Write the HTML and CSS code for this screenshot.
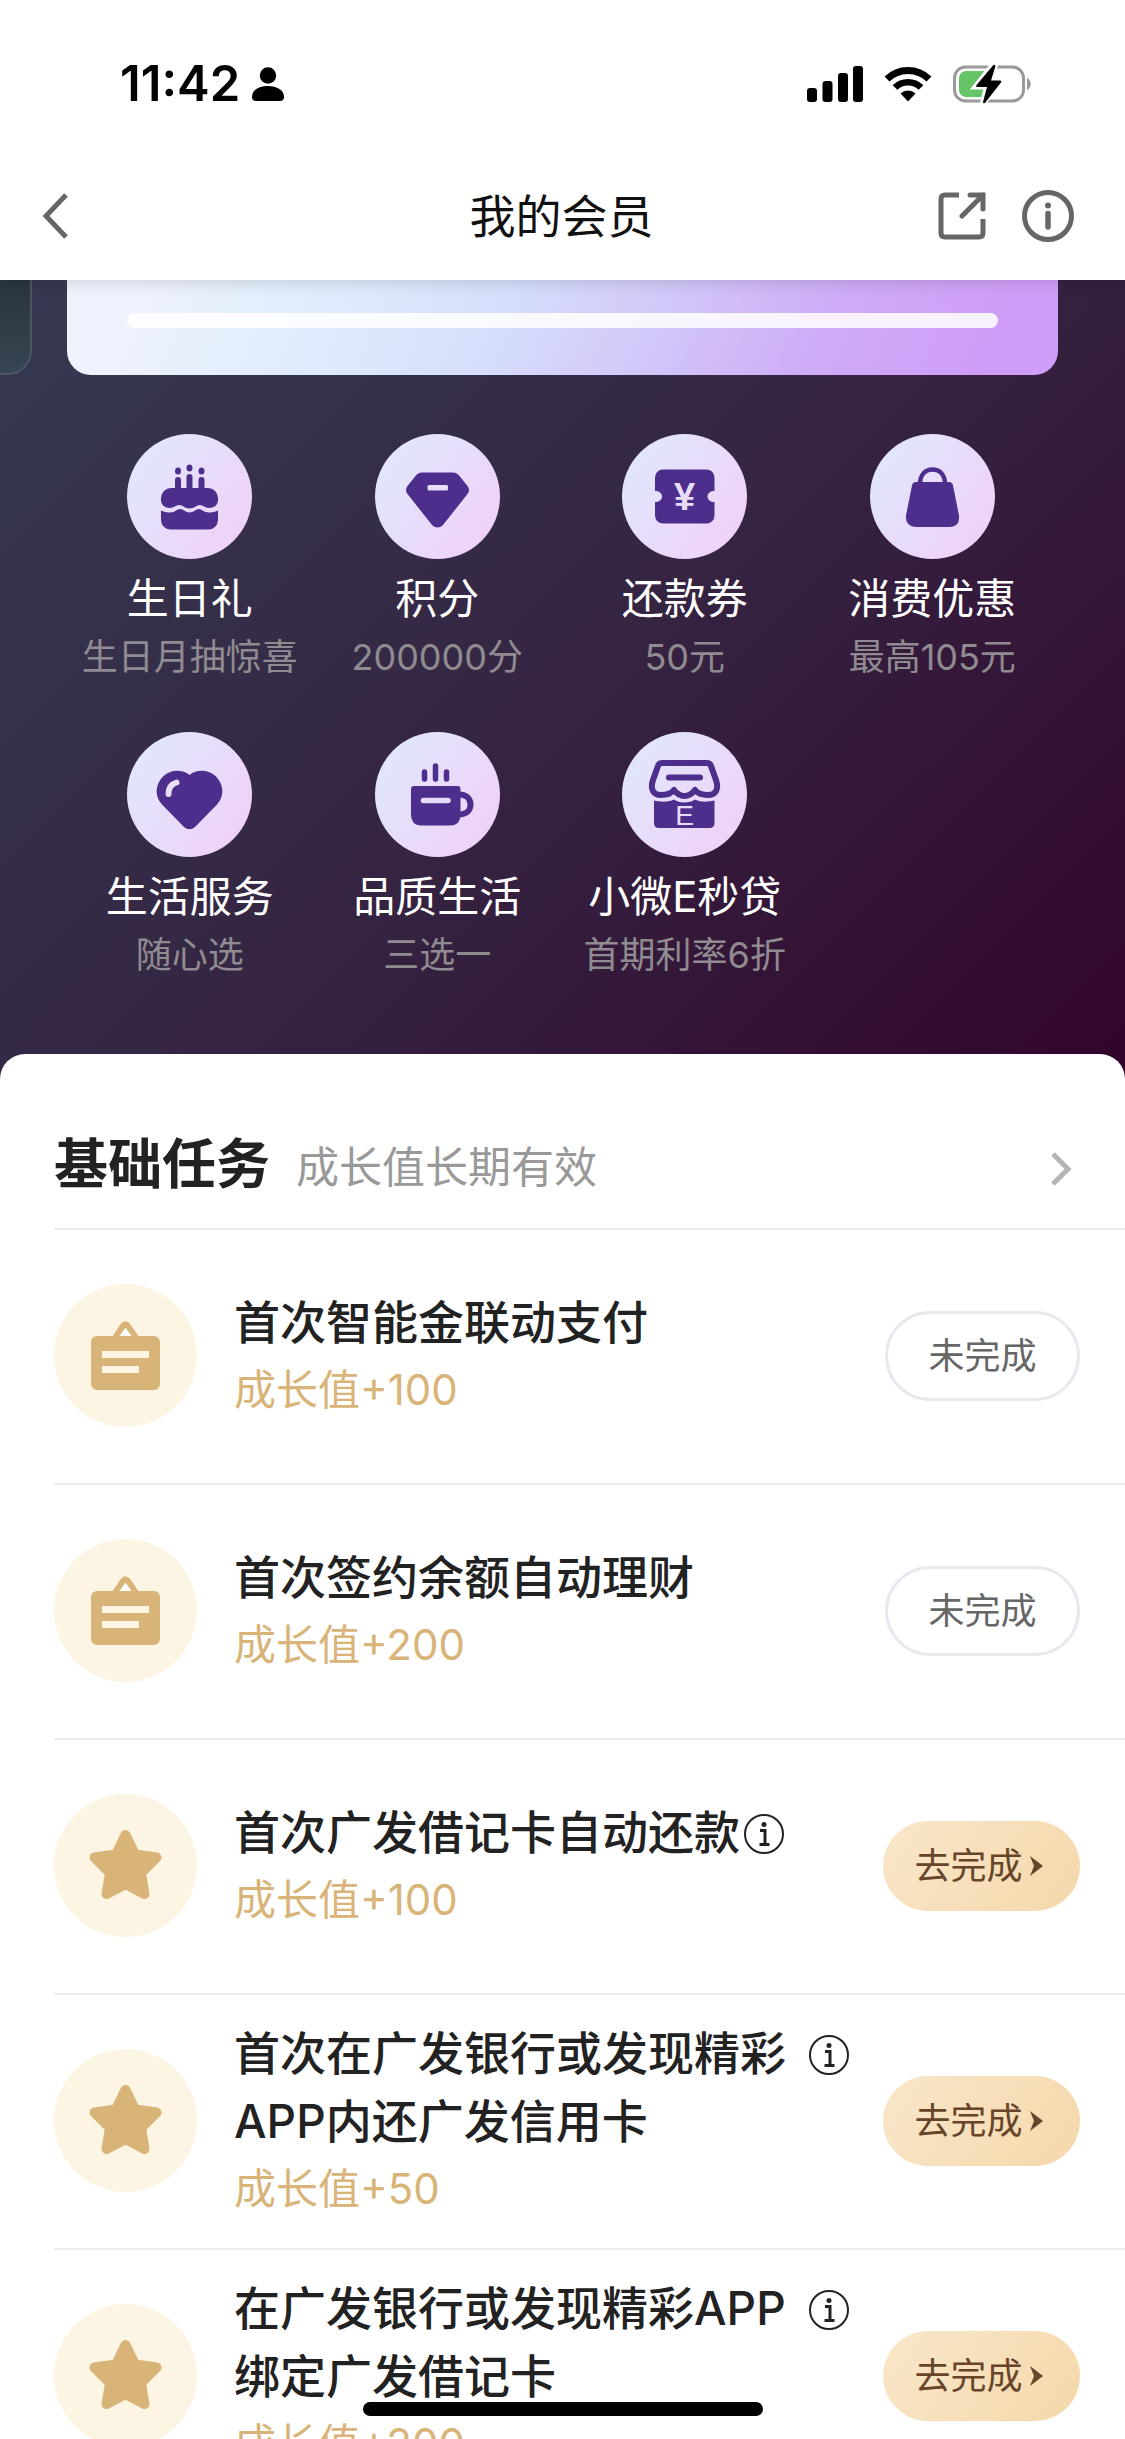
FILE: index.html
```html
<!DOCTYPE html>
<html lang="zh-CN">
<head>
<meta charset="utf-8">
<meta name="viewport" content="width=device-width, initial-scale=1">
<title>我的会员</title>
<link rel="stylesheet" href="styles.css">
</head>
<body>
<svg class="sprite" aria-hidden="true">
  <symbol id="board" viewBox="0 0 143 143">
    <path d="M61 54l8-12q2.500-3.500 5 0l8 12" fill="none" stroke="currentColor" stroke-width="6" stroke-linejoin="round"/>
    <path d="M71.500 44l6 8h-12z" fill="#fff"/>
    <path fill-rule="evenodd" fill="currentColor" d="M43 52h57a6 6 0 0 1 6 6v42a6 6 0 0 1-6 6H43a6 6 0 0 1-6-6V58a6 6 0 0 1 6-6zM48 67v7h47v-7zM48 82v7h37v-7z"/>
  </symbol>
  <symbol id="star" viewBox="0 0 143 143">
    <path d="M71.500 41L81 60.500 102.500 63.500 87 79 90.500 100 71.500 90 52.500 100 56 79 40.500 63.500 62 60.500z" fill="currentColor" stroke="currentColor" stroke-width="10" stroke-linejoin="round"/>
  </symbol>
  <symbol id="info" viewBox="0 0 40 40">
    <circle cx="20" cy="20" r="19" fill="none" stroke="currentColor" stroke-width="2"/>
    <circle cx="20" cy="10.500" r="2.500" fill="currentColor"/>
    <path d="M16 16.500h5V30M15.500 30.500h10" fill="none" stroke="currentColor" stroke-width="3"/>
  </symbol>
  <symbol id="go" viewBox="0 0 14 22">
    <path d="M1 1l13 10L1 21l4-10z" fill="currentColor"/>
  </symbol>
</svg>

<div class="app">
  <header class="top">
    <div class="status">
      <span class="time">11:42</span>
      <svg class="person" viewBox="0 0 32 34"><circle cx="16" cy="8.500" r="8.200"/><path d="M0 30C0 23 7 19 16 19s16 4 16 11q0 4-4 4H4q-4 0-4-4z"/></svg>
      <div class="signals">
        <svg width="56" height="36" viewBox="0 0 56 36"><rect y="22" width="10" height="14" rx="3"/><rect x="15.500" y="15" width="10" height="21" rx="3"/><rect x="31" y="7" width="10" height="29" rx="3"/><rect x="46" width="10" height="36" rx="3"/></svg>
        <svg width="48" height="36" viewBox="0 0 48 36"><path d="M3 13a30 30 0 0 1 42 0" fill="none" stroke="#000" stroke-width="7"/><path d="M11 21.500a18.500 18.500 0 0 1 26 0" fill="none" stroke="#000" stroke-width="6.500"/><path d="M16.500 27.500a11 11 0 0 1 15 0L24 35.500z"/></svg>
        <svg width="78" height="40" viewBox="0 0 78 40"><rect x="1.500" y="3" width="69" height="34" rx="11" fill="none" stroke="#999" stroke-width="3"/><path d="M74 14c5 2 5 10 0 12z" fill="#999"/><path d="M13 7h21v26H13a7 7 0 0 1-7-7V14a7 7 0 0 1 7-7z" fill="#65c466"/><path d="M40 1L23 22.500h11L30 39 48 17H37.500L42 1z" stroke="#fff" stroke-width="6"/><path d="M40 1.500L23.500 21q-1 2 1 2H34l-4 15q0 2 2 1L48 18.500q1-2-1-2h-9L42.500 2q-1-2-2.500-.5z"/></svg>
      </div>
    </div>
    <nav class="nav">
      <a class="back" href="#" aria-label="返回"><svg width="28" height="46" viewBox="0 0 28 46"><path d="M25 2L5 23l20 21" fill="none" stroke="currentColor" stroke-width="5"/></svg></a>
      <h1 class="nav-title">我的会员</h1>
      <div class="nav-tools">
        <button type="button" aria-label="分享"><svg width="48" height="48" viewBox="0 0 48 48" fill="none" stroke="currentColor" stroke-width="5"><path d="M21 3H7Q3 3 3 7v34q0 4 4 4h34q4 0 4-4V27"/><path d="M32 3h13v14M45 3L24 24" stroke-linecap="round"/></svg></button>
        <button type="button" aria-label="说明"><svg width="52" height="52" viewBox="0 0 52 52"><circle cx="26" cy="26" r="23.500" fill="none" stroke="currentColor" stroke-width="5"/><circle cx="26" cy="15.500" r="3" fill="currentColor"/><path d="M26 23.500v13.500" stroke="currentColor" stroke-width="5.500" stroke-linecap="round"/></svg></button>
      </div>
    </nav>
  </header>

  <main class="main">
    <section class="hero">
      <div class="cards">
        <div class="card-prev"></div>
        <div class="card"><div class="bar"></div></div>
      </div>
      <ul class="perks">
        <li class="perk">
          <svg class="perk-icon" viewBox="0 0 125 125"><g fill="currentColor"><ellipse cx="51" cy="37" rx="3" ry="3.500"/><ellipse cx="62.500" cy="34" rx="3" ry="3.500"/><ellipse cx="74.500" cy="37" rx="3" ry="3.500"/><path d="M48 56V46a3 3 0 0 1 6 0v10zM59.500 56V43a3 3 0 0 1 6 0v13zM71.500 56V46a3 3 0 0 1 6 0v10z"/><path d="M44 54h37a10 10 0 0 1 10 10v2c0 5-4 8-9 8-4 0-6-3-9-3s-6 3.500-10.500 3.500-7-3.500-10.500-3.500-5 3-9 3c-5 0-9-3-9-8v-2a10 10 0 0 1 10-10z"/><path d="M34 76.500c3 1.500 6 2 9 2 5 0 7-3.500 10-3.500s6 3.500 9.500 3.500 7-3.500 9.500-3.500 5 3.500 10 3.500c3 0 6-.5 9-2V86a9.500 9.500 0 0 1-9.500 9.500h-38A9.500 9.500 0 0 1 34 86z"/></g></svg>
          <span class="perk-name">生日礼</span><span class="perk-note">生日月抽惊喜</span>
        </li>
        <li class="perk">
          <svg class="perk-icon" viewBox="0 0 125 125"><path fill="currentColor" fill-rule="evenodd" d="M47 38.500h31q4 0 6.500 3.500l8 10q3 4 0 8L68 91q-5.500 5-11 0L32.500 60q-3-4 0-8l8-10q2.500-3.500 6.500-3.500zM54 51q-1.500 0-1.500 1.500V55q0 1.500 1.500 1.500h17.500q1.500 0 1.500-1.500v-2.500q0-1.500-1.500-1.500z"/></svg>
          <span class="perk-name">积分</span><span class="perk-note">200000分</span>
        </li>
        <li class="perk">
          <svg class="perk-icon" viewBox="0 0 125 125"><path fill="currentColor" d="M41 35.500h43.500a8 8 0 0 1 8 8V57c-4 0-7 2-7 5.500s3 5.500 7 5.500v13.500a8 8 0 0 1-8 8H41a8 8 0 0 1-8-8V68c4 0 7-2 7-5.500S37 57 33 57V43.500a8 8 0 0 1 8-8z"/><text class="yen" x="62.500" y="76" text-anchor="middle">¥</text></svg>
          <span class="perk-name">还款券</span><span class="perk-note">50元</span>
        </li>
        <li class="perk">
          <svg class="perk-icon" viewBox="0 0 125 125"><path fill="none" stroke="currentColor" stroke-width="4.500" d="M50 50c0-9 5-14.500 12.500-14.500S75 41 75 50"/><path fill="currentColor" d="M46 48h33q3.500 0 4 3.500l6 30q1 11-9 11.500H46q-11-.5-10-11.500l6-30q.5-3.500 4-3.500z"/></svg>
          <span class="perk-name">消费优惠</span><span class="perk-note">最高105元</span>
        </li>
        <li class="perk">
          <svg class="perk-icon" viewBox="0 0 125 125"><path fill="currentColor" d="M62.500 43C70 37 82 37.500 89 44.500c8 8 8.500 20 1 28L68 95q-5.500 4.500-11 0L35 72.500c-7.500-8-7-20 1-28C43 37.500 55 37 62.500 43z"/><path fill="none" stroke="#e7def8" stroke-width="6" stroke-linecap="round" d="M41.500 62c0-6 3-10 8-11.500"/></svg>
          <span class="perk-name">生活服务</span><span class="perk-note">随心选</span>
        </li>
        <li class="perk">
          <svg class="perk-icon" viewBox="0 0 125 125"><path fill="none" stroke="currentColor" stroke-width="5.500" stroke-linecap="round" d="M49.500 40v7M60.500 34v13M71.500 40v7"/><path fill="none" stroke="currentColor" stroke-width="6" d="M84 62.500c7 0 11.500 4 11.500 10s-4.500 10-11.500 10"/><path fill="currentColor" d="M39 54h43.500q3 0 3 3v26q0 10-10 10.500H46Q36 93 36 83V57q0-3 3-3z"/><path stroke="#e7dcf8" stroke-width="5.500" stroke-linecap="round" d="M48.500 68.500H73"/></svg>
          <span class="perk-name">品质生活</span><span class="perk-note">三选一</span>
        </li>
        <li class="perk">
          <svg class="perk-icon" viewBox="0 0 125 125"><path fill="none" stroke="currentColor" stroke-width="6" stroke-linejoin="round" d="M40 31h45q3 0 4 3l5 14c3 9 0 15-8 15-6 0-10-1-13-5-3 4-6 6-10.500 6S55 62 52 58c-3 4-7 5-13 5-8 0-11-6-8-15l5-14q1-3 4-3z"/><path stroke="currentColor" stroke-width="6" stroke-linecap="round" d="M47 45.500h31"/><path fill="currentColor" d="M32 68.500c6 1.500 14 2 20-1 5 4 16 4 21 0 6 3 13 2.500 19.500 1V91q0 5-5 5H37q-5 0-5-5z"/><text class="letter" x="62.500" y="93" text-anchor="middle">E</text></svg>
          <span class="perk-name">小微E秒贷</span><span class="perk-note">首期利率6折</span>
        </li>
      </ul>
    </section>

    <section class="sheet">
      <header class="sheet-head">
        <h2>基础任务</h2>
        <span class="sheet-note">成长值长期有效</span>
        <a class="more" href="#" aria-label="更多"><svg width="22" height="34" viewBox="0 0 22 34"><path d="M3 2l15 15L3 32" fill="none" stroke="currentColor" stroke-width="5"/></svg></a>
      </header>
      <ul class="tasks">
        <li class="task">
          <svg class="task-icon"><use href="#board"/></svg>
          <div class="task-body"><h3>首次智能金联动支付</h3><p>成长值+100</p></div>
          <button type="button" class="pill pending">未完成</button>
        </li>
        <li class="task">
          <svg class="task-icon"><use href="#board"/></svg>
          <div class="task-body"><h3>首次签约余额自动理财</h3><p>成长值+200</p></div>
          <button type="button" class="pill pending">未完成</button>
        </li>
        <li class="task">
          <svg class="task-icon"><use href="#star"/></svg>
          <div class="task-body"><h3><span>首次广发借记卡自动还款</span><svg class="info"><use href="#info"/></svg></h3><p>成长值+100</p></div>
          <button type="button" class="pill go">去完成<svg width="14" height="22"><use href="#go"/></svg></button>
        </li>
        <li class="task">
          <svg class="task-icon"><use href="#star"/></svg>
          <div class="task-body"><h3><span>首次在广发银行或发现精彩APP内还广发信用卡</span><svg class="info"><use href="#info"/></svg></h3><p>成长值+50</p></div>
          <button type="button" class="pill go">去完成<svg width="14" height="22"><use href="#go"/></svg></button>
        </li>
        <li class="task">
          <svg class="task-icon"><use href="#star"/></svg>
          <div class="task-body"><h3><span>在广发银行或发现精彩APP绑定广发借记卡</span><svg class="info"><use href="#info"/></svg></h3><p>成长值+200</p></div>
          <button type="button" class="pill go">去完成<svg width="14" height="22"><use href="#go"/></svg></button>
        </li>
      </ul>
    </section>
  </main>
  <div class="home-bar"></div>
</div>
</body>
</html>
```
FILE: styles.css
```css
* {
  box-sizing: border-box;
  margin: 0;
  padding: 0;
}

body {
  font-family: Inter, "Noto Sans CJK SC", sans-serif;
  color: #222;
  background: #fff;
}

ul {
  list-style: none;
}

a,
button {
  color: inherit;
  font: inherit;
  background: none;
  border: 0;
}

svg {
  display: block;
  flex: none;
}

.sprite {
  position: absolute;
  width: 0;
  height: 0;
}

.app {
  display: flex;
  flex-direction: column;
  height: 100vh;
  overflow: hidden;
}

/* Status bar and navigation */
.top {
  flex: none;
  position: relative;
  z-index: 1;
  background: #fff;
  box-shadow: 0 2px 16px rgba(0, 0, 0, 0.15);
}

.status {
  display: flex;
  align-items: center;
  height: 150px;
  padding: 18px 94px 0 120px;
  color: #000;
}

.time {
  font-size: 49px;
  font-weight: 600;
  line-height: 56px;
}

.person {
  width: 32px;
  height: 34px;
  margin-left: 12px;
}

.signals {
  display: flex;
  align-items: center;
  gap: 21px;
  margin-left: auto;
}

.nav {
  display: grid;
  grid-template-columns: 1fr auto 1fr;
  align-items: center;
  height: 130px;
  padding: 2px 51px 0 49px;
  color: #666;
}

.back {
  margin-left: -8px;
}

.nav-title {
  font-size: 46px;
  font-weight: 400;
  line-height: 64px;
  color: #111;
}

.nav-tools {
  display: flex;
  align-items: center;
  justify-content: flex-end;
  gap: 36px;
}

/* Member benefits */
.main {
  flex: 1;
  min-height: 0;
  overflow: hidden;
}

.hero {
  padding-bottom: 107px;
  background: linear-gradient(135deg, #363a52 0%, #352643 48%, #32042b 100%);
}

.cards {
  display: flex;
  gap: 35px;
  height: 95px;
  padding-right: 67px;
}

.card-prev {
  width: 32px;
  background: linear-gradient(180deg, #2b3440, #364652);
  border: 2px solid #4b5563;
  border-width: 0 2px 2px 0;
  border-radius: 0 0 24px 0;
}

.card {
  flex: 1;
  padding: 33px 60px 0;
  background: linear-gradient(115deg, #eff3fd 6%, #dceafc 30%, #d5defb 44%, #d2c6f8 60%, #ceabf7 76%, #cf9ef8 92%);
  border-radius: 0 0 24px 24px;
}

.bar {
  height: 15px;
  background: rgba(255, 255, 255, 0.85);
  border-radius: 8px;
}

.perks {
  display: grid;
  grid-template-columns: repeat(4, 1fr);
  row-gap: 47px;
  padding: 59px 69px 0 66px;
}

.perk {
  display: flex;
  flex-direction: column;
  align-items: center;
  white-space: nowrap;
}

.perk-icon {
  width: 125px;
  height: 125px;
  color: #4d2e8c;
  background: linear-gradient(125deg, #dfe9fd 5%, #f1cff8 95%);
  border-radius: 50%;
}

.yen {
  font: bold 38px "Liberation Sans", sans-serif;
  fill: #e8ddf8;
}

.letter {
  font: 28px "Liberation Sans", sans-serif;
  fill: #e8ddf8;
}

.perk-name {
  margin-top: 10px;
  font-size: 42px;
  line-height: 60px;
  color: #fff;
}

.perk-note {
  font-size: 36px;
  line-height: 56px;
  color: #8f8b90;
}

/* Task list */
.sheet {
  position: relative;
  margin-top: -36px;
  padding-left: 54px;
  background: #fff;
  border-radius: 25px 25px 0 0;
}

.sheet-head {
  display: flex;
  align-items: center;
  height: 174px;
  padding: 48px 53px 0 0;
}

.sheet-head h2 {
  font-size: 54px;
  font-weight: 700;
  line-height: 76px;
}

.sheet-note {
  margin-left: 26px;
  padding-top: 4px;
  font-size: 43px;
  line-height: 68px;
  color: #999;
}

.more {
  margin-left: auto;
  padding-top: 8px;
  color: #b5b5b5;
}

.task {
  display: flex;
  align-items: center;
  height: 255px;
  padding: 0 45px 2px 0;
  border-top: 2px solid #ececee;
}

.task-icon {
  width: 143px;
  height: 143px;
  color: #d9b478;
  background: #fdf5e3;
  border-radius: 50%;
}

.task-body {
  flex: 1;
  margin: 0 34px 0 37px;
}

.task-body h3 {
  display: flex;
  font-size: 46px;
  font-weight: 500;
  line-height: 68px;
}

.task-body p {
  font-size: 42px;
  line-height: 68px;
  color: #d9b478;
}

.info {
  width: 40px;
  height: 40px;
  margin: 16px 0 0 4px;
}

.pill {
  display: flex;
  align-items: center;
  justify-content: center;
  flex: none;
  width: 197px;
  height: 90px;
  font-size: 36px;
  line-height: 54px;
  border-radius: 45px;
}

.pending {
  width: 195px;
  color: #666;
  border: 3px solid #e8e8ef;
}

.go {
  gap: 6px;
  padding-right: 6px;
  color: #68452a;
  background: linear-gradient(125deg, #f9e7ca, #f4d8aa);
}

.home-bar {
  position: fixed;
  bottom: 23px;
  left: 50%;
  width: 400px;
  height: 14px;
  margin-left: -200px;
  background: #000;
  border-radius: 7px;
}
```
